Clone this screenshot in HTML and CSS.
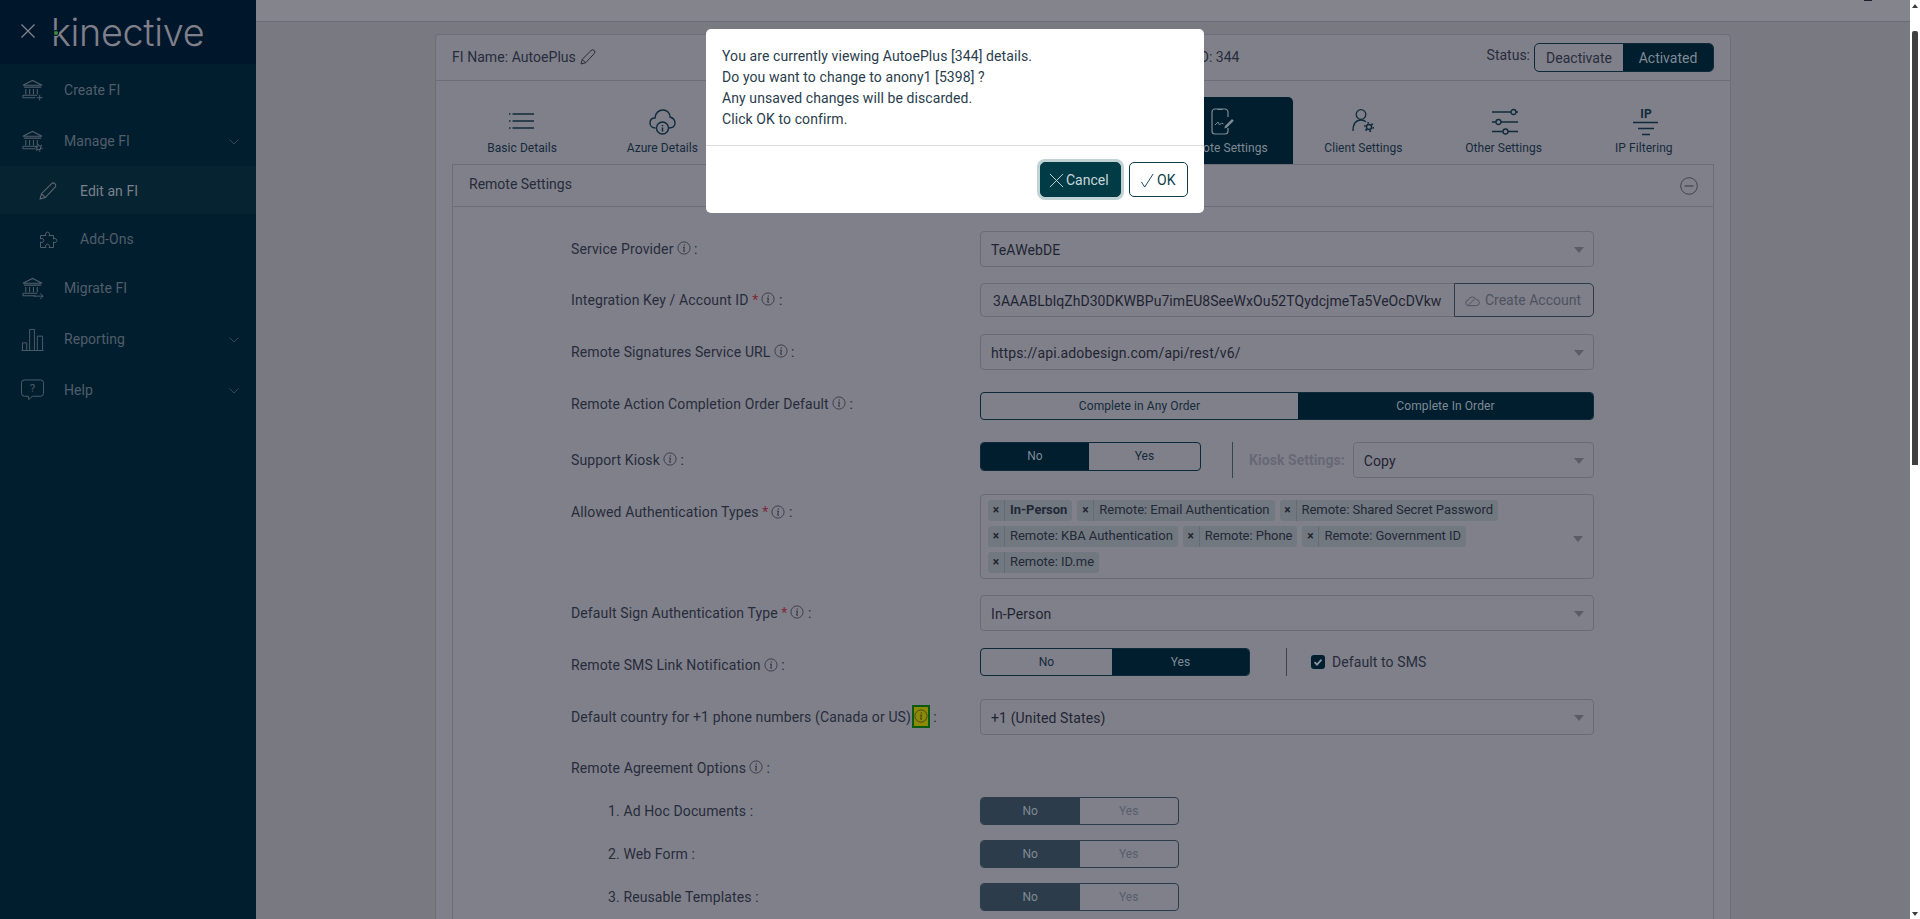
FILE: index.html
```html
<!DOCTYPE html>
<html lang="en">
<head>
<meta charset="utf-8">
<title>Kinective - Remote Settings</title>
<link rel="stylesheet" href="styles.css">
</head>
<body>
<svg class="defs" width="0" height="0" aria-hidden="true">
  <symbol id="bank" viewBox="0 0 24 24">
    <path d="M2 6.500 12 1.500 22 6.500ZM3 8.500H21M5 10.500V16M9 10.500V16M13 10.500V16M17 10.500V16M2 17H17M2 19.500V17M2 19.500H15" fill="none" stroke="currentColor" stroke-width="1.100"/>
  </symbol>
  <symbol id="gear" viewBox="0 0 12 12">
    <circle cx="6" cy="6" r="2.800" fill="none" stroke="currentColor" stroke-width="1.600"/>
    <circle cx="6" cy="6" r="4.600" fill="none" stroke="currentColor" stroke-width="1.600" stroke-dasharray="1.900 2.900"/>
  </symbol>
  <symbol id="info" viewBox="0 0 14 14">
    <circle cx="7" cy="7" r="6.100" fill="none" stroke="currentColor" stroke-width=".8"/>
    <path d="M7.300 3.400v1.300M6 6.200h1.400L6.700 10.200h1.300" fill="none" stroke="currentColor" stroke-width="1"/>
  </symbol>
  <symbol id="pencil" viewBox="0 0 16 16">
    <path d="M1 15l1.200-4.600L11 1.600a1.900 1.900 0 0 1 3.300 2.900L5.600 13.800ZM2.200 10.400l3.400 3.400" fill="none" stroke="currentColor" stroke-width="1"/>
  </symbol>
  <symbol id="chev" viewBox="0 0 10 6">
    <path d="M.5.500 5 5 9.500.500" fill="none" stroke="currentColor" stroke-width=".9"/>
  </symbol>
</svg>

<div class="page">
  <aside class="sidebar">
    <div class="brand">
      <svg class="brand-close" viewBox="0 0 14 14"><path d="M.5.500 13.500 13.500M13.500.500.5 13.500" fill="none" stroke="currentColor" stroke-width="1.200"/></svg>
      <span class="logo">kinective<i class="logo-dot"></i></span>
    </div>
    <nav class="nav">
      <a class="nav-item">
        <svg class="nav-icon" viewBox="0 0 24 24"><use href="#bank"/><path d="M19.500 16.500v6M16.500 19.500h6" fill="none" stroke="currentColor"/></svg>
        <span>Create FI</span>
      </a>
      <a class="nav-item">
        <svg class="nav-icon" viewBox="0 0 24 24"><use href="#bank"/><use href="#gear" x="14" y="14" width="9" height="9"/></svg>
        <span>Manage FI</span>
        <svg class="nav-chev"><use href="#chev"/></svg>
      </a>
      <a class="nav-sub nav-sub-active">
        <svg class="nav-sub-icon"><use href="#pencil"/></svg>
        <span>Edit an FI</span>
      </a>
      <a class="nav-sub nav-sub-last">
        <svg class="nav-sub-icon" viewBox="0 0 18 18"><path d="M1.500 4.500H7a2 2 0 1 1 3 0H14.500V8a2 2 0 1 1 0 3V16.500H10a2 2 0 1 0-3 0H1.500V11a2 2 0 1 0 0-3Z" fill="none" stroke="currentColor"/></svg>
        <span>Add-Ons</span>
      </a>
      <a class="nav-item">
        <svg class="nav-icon" viewBox="0 0 24 24"><use href="#bank"/><path d="M13 20h10M20 17l3 3-3 3" fill="none" stroke="currentColor"/></svg>
        <span>Migrate FI</span>
      </a>
      <a class="nav-item">
        <svg class="nav-icon" viewBox="0 0 24 24"><path d="M.5 23.500H23.500M1.500 23V15.500H6V23M9 23V1.500H14V23M17 23V8.500H22.500V23" fill="none" stroke="currentColor"/></svg>
        <span>Reporting</span>
        <svg class="nav-chev"><use href="#chev"/></svg>
      </a>
      <a class="nav-item">
        <svg class="nav-icon" viewBox="0 0 24 24"><path d="M3.500 1H20.500A3 3 0 0 1 23.500 4V15A3 3 0 0 1 20.500 18H12L8 21.500V18H3.500A3 3 0 0 1 .5 15V4A3 3 0 0 1 3.500 1Z" fill="none" stroke="currentColor"/><text x="12" y="14" class="help-mark">?</text></svg>
        <span>Help</span>
        <svg class="nav-chev"><use href="#chev"/></svg>
      </a>
    </nav>
  </aside>

  <main class="main">
    <div class="topbar"><span class="topbar-tip"></span></div>
    <section class="card">
      <header class="card-head">
        <div class="fi-name">FI Name: AutoePlus<svg class="fi-pencil"><use href="#pencil"/></svg></div>
        <div class="fi-id">FI ID: 344</div>
        <div class="fi-status">
          <span class="fi-status-label">Status:</span>
          <div class="status-toggle">
            <span class="status-opt">Deactivate</span>
            <span class="status-opt status-on">Activated</span>
          </div>
        </div>
      </header>
      <div class="card-body">
        <div class="tabs">
          <a class="tab">
            <svg class="tab-icon" viewBox="0 0 32 28"><path d="M6.500 6H28M6.500 13H28M6.500 20H28M3 6H4.500M3 13H4.500M3 20H4.500" fill="none" stroke="currentColor" stroke-width="1.500"/></svg>
            <span>Basic Details</span>
          </a>
          <a class="tab">
            <svg class="tab-icon" viewBox="0 0 32 28"><path d="M9.500 20C6 20 4 17.500 4 15 4 12 6 10 9 10 9 5 13 2 17 2 21 2 24 5 24 9 27 10 29 12 29 15 29 18 27 20 23 20" fill="none" stroke="currentColor" stroke-width="1.400"/><circle cx="16.500" cy="20" r="6" fill="none" stroke="currentColor" stroke-width="1.400"/><path d="M16.500 17v1.300M16.500 19.500V23.500" fill="none" stroke="currentColor" stroke-width="1.500"/></svg>
            <span>Azure Details</span>
          </a>
          <a class="tab tab-hidden"></a>
          <a class="tab tab-hidden"></a>
          <a class="tab tab-hidden"></a>
          <a class="tab tab-active">
            <svg class="tab-icon" viewBox="0 0 32 28"><path d="M21 9V4A3 3 0 0 0 18 1H8A3 3 0 0 0 5 4V23A3 3 0 0 0 8 26H18A3 3 0 0 0 21 23V20M10.500 1.500h5" fill="none" stroke="currentColor" stroke-width="1.200"/><path d="M8 17l3-3 1.500 3 2-2 2 1" fill="none" stroke="currentColor"/><path d="M18 18l7-7 1.800 1.800-7 7-2.500.6Z" fill="currentColor"/></svg>
            <span>Remote Settings</span>
          </a>
          <a class="tab">
            <svg class="tab-icon" viewBox="0 0 32 28"><circle cx="14" cy="6.500" r="4.800" fill="none" stroke="currentColor" stroke-width="1.300"/><path d="M6 23C6 16 9 12 14 12c2 0 3.500.6 5 1.800" fill="none" stroke="currentColor" stroke-width="1.300"/><use href="#gear" x="16.500" y="13.500" width="11" height="11"/></svg>
            <span>Client Settings</span>
          </a>
          <a class="tab">
            <svg class="tab-icon" viewBox="0 0 32 28"><path d="M4 4H23M28 4H30M4 14H8M13 14H30M4 23.500H15M20 23.500H30" fill="none" stroke="currentColor" stroke-width="1.400"/><circle cx="25.500" cy="4" r="2.500" fill="none" stroke="currentColor" stroke-width="1.300"/><circle cx="10.500" cy="14" r="2.500" fill="none" stroke="currentColor" stroke-width="1.300"/><circle cx="17.500" cy="23.500" r="2.500" fill="none" stroke="currentColor" stroke-width="1.300"/></svg>
            <span>Other Settings</span>
          </a>
          <a class="tab">
            <svg class="tab-icon" viewBox="0 0 32 28"><text x="18" y="10" class="ip-mark">IP</text><path d="M5 14.500H30M10 20.500H26M14 26.500H22" fill="none" stroke="currentColor" stroke-width="1.400"/></svg>
            <span>IP Filtering</span>
          </a>
        </div>

        <section class="panel">
          <div class="panel-head">
            <span>Remote Settings</span>
            <svg class="panel-minus" viewBox="0 0 18 18"><circle cx="9" cy="9" r="8.300" fill="none" stroke="currentColor" stroke-width=".8"/><path d="M4.500 9H13.500" fill="none" stroke="currentColor"/></svg>
          </div>
          <div class="form">
            <div class="row">
              <div class="label">Service Provider<svg class="info"><use href="#info"/></svg> :</div>
              <div class="select"><span>TeAWebDE</span><i class="caret"></i></div>
            </div>
            <div class="row row-key">
              <div class="label">Integration Key / Account ID <b class="req">*</b><svg class="info"><use href="#info"/></svg> :</div>
              <div class="key-group">
                <div class="key-value">3AAABLblqZhD30DKWBPu7imEU8SeeWxOu52TQydcjmeTa5VeOcDVkw</div>
                <div class="key-btn">
                  <svg class="key-cloud" viewBox="0 0 16 12"><path d="M4 11A3 3 0 0 1 3.500 5 4.500 4.500 0 0 1 12 4.500 3.200 3.200 0 0 1 12 11ZM3 11 11 3" fill="none" stroke="currentColor"/></svg>
                  Create Account
                </div>
              </div>
            </div>
            <div class="row row-gap">
              <div class="label">Remote Signatures Service URL<svg class="info"><use href="#info"/></svg> :</div>
              <div class="select"><span>https://api.adobesign.com/api/rest/v6/</span><i class="caret"></i></div>
            </div>
            <div class="row row-gap">
              <div class="label label-up">Remote Action Completion Order Default<svg class="info"><use href="#info"/></svg> :</div>
              <div class="seg seg-order">
                <span class="seg-opt seg-order-a">Complete in Any Order</span>
                <span class="seg-opt seg-order-b seg-on">Complete In Order</span>
              </div>
            </div>
            <div class="row">
              <div class="label">Support Kiosk<svg class="info"><use href="#info"/></svg> :</div>
              <div class="control-line control-top">
                <div class="seg seg-kiosk">
                  <span class="seg-opt seg-kiosk-a seg-on">No</span>
                  <span class="seg-opt seg-kiosk-b">Yes</span>
                </div>
                <i class="vline vline-kiosk"></i>
                <span class="kiosk-label">Kiosk Settings:</span>
                <div class="select select-kiosk"><span>Copy</span><i class="caret"></i></div>
              </div>
            </div>
            <div class="row">
              <div class="label label-top">Allowed Authentication Types <b class="req">*</b><svg class="info"><use href="#info"/></svg> :</div>
              <div class="multi">
                <div class="chips">
                  <span class="chip"><i class="chip-x">×</i><span class="chip-text chip-bold">In-Person</span></span>
                  <span class="chip"><i class="chip-x">×</i><span class="chip-text">Remote: Email Authentication</span></span>
                  <span class="chip"><i class="chip-x">×</i><span class="chip-text">Remote: Shared Secret Password</span></span>
                  <span class="chip"><i class="chip-x">×</i><span class="chip-text">Remote: KBA Authentication</span></span>
                  <span class="chip"><i class="chip-x">×</i><span class="chip-text">Remote: Phone</span></span>
                  <span class="chip"><i class="chip-x">×</i><span class="chip-text">Remote: Government ID</span></span>
                  <span class="chip"><i class="chip-x">×</i><span class="chip-text">Remote: ID.me</span></span>
                </div>
                <i class="caret"></i>
              </div>
            </div>
            <div class="row">
              <div class="label">Default Sign Authentication Type <b class="req">*</b><svg class="info"><use href="#info"/></svg> :</div>
              <div class="select"><span>In-Person</span><i class="caret"></i></div>
            </div>
            <div class="row row-sms">
              <div class="label label-down">Remote SMS Link Notification<svg class="info"><use href="#info"/></svg> :</div>
              <div class="control-line">
                <div class="seg seg-sms">
                  <span class="seg-opt seg-sms-a">No</span>
                  <span class="seg-opt seg-sms-b seg-on">Yes</span>
                </div>
                <i class="vline vline-sms"></i>
                <span class="check"><svg viewBox="0 0 14 14"><path d="M3.500 7.200 6 9.600 10.500 4.600" fill="none" stroke="currentColor" stroke-width="1.800"/></svg></span>
                <span class="check-text">Default to SMS</span>
              </div>
            </div>
            <div class="row row-gap">
              <div class="label">Default country for +1 phone numbers (Canada or US) <span class="info-hl"><svg class="info info-in"><use href="#info"/></svg></span> :</div>
              <div class="select"><span>+1 (United States)</span><i class="caret"></i></div>
            </div>
            <div class="row-head">
              <div class="label">Remote Agreement Options<svg class="info"><use href="#info"/></svg> :</div>
            </div>
            <div class="row row-sub">
              <div class="label label-sub">1. Ad Hoc Documents :</div>
              <div class="seg seg-opts">
                <span class="seg-opt seg-half seg-dim-on">No</span>
                <span class="seg-opt seg-half seg-dim">Yes</span>
              </div>
            </div>
            <div class="row row-sub">
              <div class="label label-sub">2. Web Form :</div>
              <div class="seg seg-opts">
                <span class="seg-opt seg-half seg-dim-on">No</span>
                <span class="seg-opt seg-half seg-dim">Yes</span>
              </div>
            </div>
            <div class="row row-sub">
              <div class="label label-sub">3. Reusable Templates :</div>
              <div class="seg seg-opts">
                <span class="seg-opt seg-half seg-dim-on">No</span>
                <span class="seg-opt seg-half seg-dim">Yes</span>
              </div>
            </div>
          </div>
        </section>
      </div>
    </section>
  </main>

  <div class="scrollbar">
    <i class="scroll-up"></i>
    <i class="scroll-thumb"></i>
    <i class="scroll-down"></i>
  </div>
</div>

<div class="dialog" role="dialog">
  <div class="dialog-body">
    You are currently viewing AutoePlus [344] details.<br>
    Do you want to change to anony1 [5398] ?<br>
    Any unsaved changes will be discarded.<br>
    Click OK to confirm.
  </div>
  <div class="dialog-foot">
    <button class="btn btn-cancel"><svg viewBox="0 0 16 16"><path d="M1 1 15 15M15 1 1 15" fill="none" stroke="currentColor"/></svg>Cancel</button>
    <button class="btn btn-ok"><svg viewBox="0 0 16 16"><path d="M1.500 9.500 5 15 14 1" fill="none" stroke="currentColor"/></svg>OK</button>
  </div>
</div>
</body>
</html>
```

FILE: styles.css
```css
* { box-sizing: border-box; }
html, body { margin: 0; height: 100%; overflow: hidden; }
body { font-family: Roboto, "Liberation Sans", sans-serif; font-size: 14px; line-height: 21px; color: #272c3b; background: #797982; }
.defs { position: absolute; }
i { font-style: normal; }
svg { display: block; }

.page { display: flex; height: 919px; }

/* Sidebar */
.sidebar { width: 256px; flex: none; background: #001e2e; color: #515d6b; letter-spacing: .05px; }
.brand { height: 64px; background: #00162a; display: flex; align-items: flex-start; padding: 24px 0 0 21px; }
.brand-close { width: 14px; height: 14px; color: #84858f; }
.logo { position: relative; margin: -15px 0 0 16px; font-family: Inter, sans-serif; font-weight: 300; font-size: 37.800px; line-height: 46px; letter-spacing: -.35px; color: #7f808b; }
.logo-dot { position: absolute; left: 3px; top: 22px; width: 4px; height: 4px; border-radius: 50%; background: #3f8a35; box-shadow: 0 0 0 1px #00162a; }
.nav { display: flex; flex-direction: column; padding-top: 1px; }
.nav-item { height: 51px; display: flex; align-items: center; padding: 0 17px 0 21px; }
.nav-icon { width: 23px; height: 23px; margin-right: 20px; flex: none; overflow: visible; }
.nav-chev { width: 10px; height: 6px; margin-left: auto; color: #3f4c5a; }
.nav-sub { height: 48px; display: flex; align-items: center; padding: 2px 0 0 39px; }
.nav-sub-active { background: #062331; color: #7a808c; margin-top: -1px; }
.nav-sub-last { height: 49px; }
.nav-sub-icon { width: 18px; height: 18px; margin-right: 23px; flex: none; overflow: visible; }
.nav-sub-active .nav-sub-icon { color: #5e6671; }
.help-mark { font-family: Roboto, sans-serif; font-size: 12px; text-anchor: middle; fill: currentColor; }

/* Main */
.main { flex: 1; min-width: 0; overflow: hidden; }
.topbar { height: 22px; background: #84848d; border-bottom: 1px solid #6c6c77; display: flex; justify-content: flex-end; padding-right: 38px; }
.topbar-tip { width: 8px; height: 1px; background: #1d1f2a; }
.card { margin: 12px 179px 0 179px; background: #80808a; border: 1px solid #6d6d79; border-bottom: 0; border-radius: 4px 4px 0 0; height: 900px; }
.card-head { height: 46px; padding: 0 16px 0 16px; display: flex; align-items: center; border-bottom: 1px solid #6d6d79; position: relative; }
.fi-name { display: flex; align-items: center; gap: 4px; white-space: pre; letter-spacing: .05px; }
.fi-pencil { width: 16px; height: 16px; margin-top: -2px; }
.fi-id { margin-left: 585px; }
.fi-status { margin-left: auto; display: flex; align-items: center; gap: 4px; }
.fi-status-label { margin-top: -4px; }
.status-toggle { display: flex; width: 180px; height: 29px; border: 1px solid #0e2a3a; border-radius: 5px; overflow: hidden; }
.status-opt { width: 88px; text-align: center; line-height: 28px; }
.status-on { flex: 1; background: #001e2e; color: #7f8a95; }
.card-body { padding: 16px 16px 0; }

.tabs { display: flex; height: 67px; }
.tab { flex: 1 1 0; display: flex; flex-direction: column; align-items: center; padding-top: 11px; font-size: 12px; line-height: 18px; color: #152a3b; border-radius: 5px 5px 0 0; letter-spacing: .06px; }
.tab-icon { width: 32px; height: 28px; margin-bottom: 3px; flex: none; color: #0f2a3a; overflow: visible; }
.tab-active { background: #001e2e; color: #7f8a95; }
.tab-active .tab-icon { color: #7f8a95; }
.tab-hidden { visibility: hidden; }
.ip-mark { font-family: Roboto, sans-serif; font-size: 12px; font-weight: 700; text-anchor: middle; fill: currentColor; }

.panel { border: 1px solid #6d6d79; border-bottom: 0; height: 900px; }
.panel-head { height: 42px; padding: 0 15px 2px 16px; display: flex; align-items: center; justify-content: space-between; border-bottom: 1px solid #6d6d79; color: #262b3a; }
.panel-minus { width: 18px; height: 18px; color: #2f3644; margin-top: 2px; }

/* Form */
.form { padding: 24px 0 0 118px; }
.row { display: grid; grid-template-columns: 409px 614px; align-items: center; margin-bottom: 16px; }
.row-key { margin-bottom: 17px; }
.row-gap { margin-bottom: 22px; }
.row-sms { margin-bottom: 23px; }
.row-head { height: 22px; margin-bottom: 18px; display: flex; align-items: center; }
.row-sub { margin-bottom: 15px; }
.label { display: flex; align-items: center; color: #272c3b; white-space: pre; line-height: 21px; letter-spacing: .12px; }
.label-top { align-self: start; padding-top: 8px; }
.label-up { margin-top: -4px; }
.label-down { margin-top: 8px; }
.label-sub { padding-left: 37px; }
.req { color: #7e2a3b; font-weight: 400; }
.info { width: 14px; height: 14px; margin: -2px 0 0 3px; color: #2b3040; flex: none; }
.info-hl { width: 18px; height: 23px; background: #8a8a08; border: 2px solid #0b5a12; display: flex; align-items: center; justify-content: center; margin: -2px 0 0 -3px; }
.info-in { margin: 0; color: #3d3d20; }

.select { height: 36px; border: 1px solid #6b6b77; border-radius: 4px; display: flex; align-items: center; padding: 0 10px; position: relative; color: #1f2432; justify-content: space-between; letter-spacing: .13px; }
.select span { margin-top: 2px; }
.caret { width: 0; height: 0; border: 5px solid transparent; border-top: 6px solid #5b5c66; border-bottom: 0; margin-right: -1px; margin-left: auto; flex: none; }
.select .caret { margin-top: 1px; }
.select-kiosk { flex: 1; margin-left: 8px; }

.key-group { height: 34px; display: flex; }
.key-value { flex: 1; padding: 0 11px 0 12px; line-height: 34px; color: #1f2432; white-space: nowrap; overflow: hidden; border: 1px solid #6b6b77; border-right: 0; border-radius: 5px 0 0 5px; letter-spacing: .05px; }
.key-btn { width: 140px; flex: none; border: 1px solid #2c3a4a; border-radius: 0 5px 5px 0; display: flex; align-items: center; justify-content: flex-end; gap: 5px; padding: 1px 12px 0 0; color: #4d5260; }
.key-cloud { width: 15px; height: 12px; flex: none; }

.seg { display: flex; border: 1px solid #0e2a3a; border-radius: 4px; overflow: hidden; font-size: 12px; }
.seg-opt { text-align: center; display: block; }
.seg-on { background: #001e2e; color: #7f8a95; }
.seg-order { height: 28px; width: 614px; line-height: 26px; color: #152a3b; letter-spacing: .09px; }
.seg-order-a { width: 317px; }
.seg-order-b { flex: 1; }
.seg-kiosk { width: 221px; height: 29px; line-height: 26px; color: #152a3b; flex: none; }
.seg-kiosk-a { width: 108px; }
.seg-kiosk-b { flex: 1; }
.seg-sms { width: 270px; height: 28px; line-height: 26px; color: #152a3b; flex: none; }
.seg-sms-a { width: 131px; }
.seg-sms-b { flex: 1; }
.seg-opts { width: 199px; height: 28px; line-height: 26px; border-color: #2c3c4b; }
.seg-half { flex: 1; }
.seg-dim-on { background: #2c3c4b; color: #7f8a95; }
.seg-dim { color: #565e6a; }

.control-line { display: flex; align-items: center; }
.control-top { align-items: flex-start; height: 36px; }
.vline { width: 1px; flex: none; background: #3c4150; }
.vline-kiosk { height: 36px; margin: 0 16px 0 31px; }
.vline-sms { height: 28px; margin: 0 24px 0 36px; }
.kiosk-label { font-weight: 700; color: #666875; line-height: 36px; letter-spacing: .05px; }
.check { width: 14px; height: 14px; border-radius: 3px; background: #001e2e; color: #8b95a0; flex: none; margin: 1px 7px 0 0; }
.check-text { color: #272c3b; letter-spacing: .1px; margin-top: 2px; }

.multi { min-height: 85px; border: 1px solid #6b6b77; border-radius: 4px; display: flex; align-items: center; padding: 5px 11px 0 7px; }
.chips { flex: 1; display: flex; flex-wrap: wrap; gap: 5px; align-self: flex-start; max-width: 560px; }
.chip { height: 21px; display: inline-flex; background: #727880; border-radius: 3px; font-size: 13px; line-height: 20px; color: #222836; letter-spacing: -.03px; }
.chip-x { width: 17px; border-right: 1px solid #656b74; text-align: center; font-weight: 700; font-size: 12px; color: #20252f; }
.chip-text { padding: 0 5px; }
.chip-bold { font-weight: 700; }

/* Scrollbar */
.scrollbar { width: 10px; flex: none; background: #fff; position: relative; display: flex; flex-direction: column; align-items: center; }
.scroll-up { margin-top: 4px; width: 0; height: 0; border: 3.500px solid transparent; border-bottom: 4px solid #3d3d3d; border-top: 0; }
.scroll-thumb { width: 6px; height: 434px; margin-top: 23px; background: #404040; border-radius: 2px 2px 0 0; }
.scroll-down { margin-top: auto; margin-bottom: 3px; width: 0; height: 0; border: 3.500px solid transparent; border-top: 4px solid #3d3d3d; border-bottom: 0; }

/* Dialog over the page */
.dialog { position: fixed; left: 706px; top: 29px; width: 498px; height: 184px; background: #fff; border-radius: 5px; color: #2a3d4c; }
.dialog-body { height: 117px; padding: 16.500px 16px 0; border-bottom: 1px solid #dcdcdc; letter-spacing: .09px; }
.dialog-foot { display: flex; justify-content: flex-end; gap: 8px; padding: 16px 16px 0; }
.btn { height: 35px; display: flex; align-items: center; font: inherit; border-radius: 5px; padding: 1px 0 0; cursor: pointer; }
.btn svg { width: 15px; height: 15px; flex: none; }
.btn-cancel { width: 81px; background: #003b46; border: 1px solid #003b46; color: #c9d6d8; box-shadow: 0 0 0 3px #c0d2d3; padding-left: 8px; gap: 2px; }
.btn-ok { width: 59px; background: #fff; border: 1px solid #0d3f4a; color: #0d3f4a; padding-left: 10px; gap: 2px; }
```
